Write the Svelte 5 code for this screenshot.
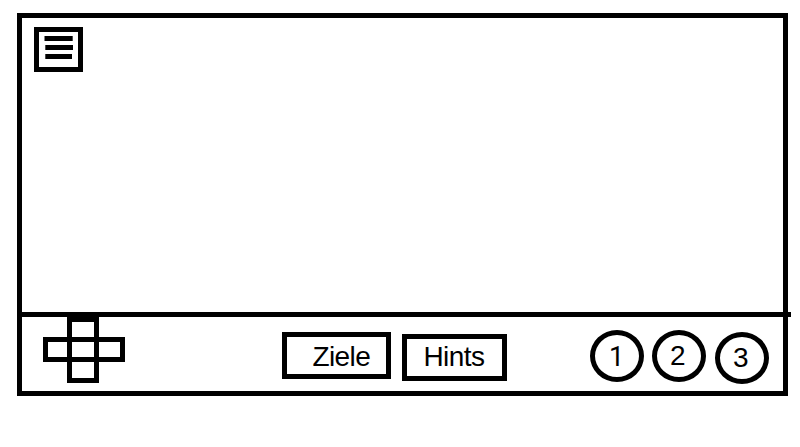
<script>
  const actions = [
    { label: 'Ziele', name: 'goals' },
    { label: 'Hints', name: 'hints' }
  ];
  const slots = [
    { label: '1', name: 'one' },
    { label: '2', name: 'two' },
    { label: '3', name: 'three' }
  ];
</script>

<div class="page">
  <main class="frame">
    <section class="stage">
      <button class="menu" aria-label="Menu">
        <svg width="39" height="35" viewBox="0 0 39 35">
          <path d="M5.5 6.5H33.7M6.3 15.5H34M6.3 24.5H33" stroke="#000" stroke-width="5" />
        </svg>
      </button>
    </section>
    <div class="divider"></div>
    <footer class="controls">
      <svg class="dpad" width="82" height="66" viewBox="0 0 82 66" fill="none" stroke="#000" stroke-width="5">
        <rect x="26.5" y="2.5" width="27" height="61" />
        <rect x="2.5" y="22.5" width="77" height="20" />
      </svg>
      <div class="actions">
        {#each actions as action}
          <button class="action {action.name}">{action.label}</button>
        {/each}
      </div>
      <div class="slots">
        {#each slots as slot}
          <button class="slot {slot.name}">{slot.label}</button>
        {/each}
      </div>
    </footer>
  </main>
</div>

<style>
  :global(body) {
    background: #fff;
  }
  .page {
    box-sizing: border-box;
    width: 800px;
    height: 447px;
    padding: 13px 12px 51px 17px;
    overflow: hidden;
  }
  .frame {
    box-sizing: border-box;
    display: flex;
    flex-direction: column;
    width: 771px;
    height: 383px;
    border: 5px solid #000;
    background: #fff;
  }
  button {
    box-sizing: border-box;
    margin: 0;
    border: 5px solid #000;
    background: #fff;
    color: #000;
    font: 28px/28px 'Liberation Sans', Arial, sans-serif;
    text-align: left;
    white-space: nowrap;
    display: flex;
    align-items: flex-start;
    justify-content: flex-start;
  }
  .stage {
    height: 294px;
    box-sizing: border-box;
    padding: 9px 12px;
  }
  .menu {
    width: 49px;
    height: 45px;
    padding: 0;
  }
  svg {
    display: block;
  }
  .divider {
    flex: none;
    height: 5px;
    width: 769px;
    background: #000;
  }
  .controls {
    display: flex;
    align-items: flex-start;
    height: 74px;
    padding-left: 21px;
  }
  .dpad {
    flex: none;
  }
  .actions {
    display: flex;
    gap: 11px;
    margin: 15px 0 0 157px;
  }
  .action {
    height: 47px;
    letter-spacing: -0.6px;
  }
  .goals {
    width: 109px;
    padding: 6px 0 0 25.5px;
  }
  .hints {
    width: 105px;
    margin-top: 2px;
    padding: 4px 0 0 16.5px;
  }
  .slots {
    display: flex;
    margin: 13px 0 0 83px;
  }
  .slot {
    width: 54px;
    height: 52px;
    border-radius: 50%;
  }
  .one {
    padding: 9px 0 0 14px;
    font: 27px/27px Roboto, sans-serif;
  }
  .two {
    margin-left: 8px;
    padding: 7px 0 0 13px;
  }
  .three {
    margin: 2px 0 0 9px;
    padding: 7px 0 0 13px;
  }
</style>
